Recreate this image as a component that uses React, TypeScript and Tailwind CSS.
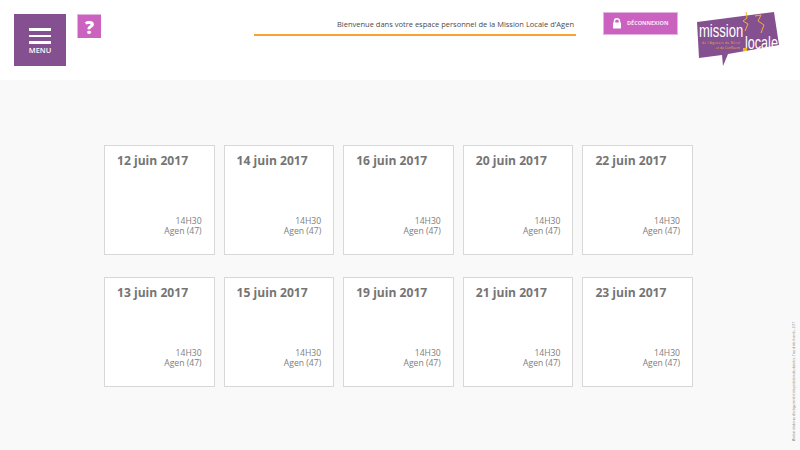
import React from 'react';

const row1 = ['12 juin 2017', '14 juin 2017', '16 juin 2017', '20 juin 2017', '22 juin 2017'];
const row2 = ['13 juin 2017', '15 juin 2017', '19 juin 2017', '21 juin 2017', '23 juin 2017'];

function DateCard({ date }: { date: string }) {
  return (
    <div className="flex h-[110px] flex-col justify-between border border-[#d8d8d8] bg-white pt-[5px] pr-3 pb-[18px] pl-3">
      <div className="text-[12.1px] leading-[20px] font-bold text-[#757575]">{date}</div>
      <div className="text-right text-[8.6px] leading-[10px] text-[#7d7d7d]">
        14H30
        <br />
        Agen (47)
      </div>
    </div>
  );
}

function Logo() {
  return (
    <svg width="86" height="58" viewBox="0 0 86 58" className="block">
      <polygon points="1,12 78,2 83,35 32,44 27,56 26,45 3,48" fill="#85508f" />
      <text transform="translate(3 27) scale(0.93 1.28)" fontFamily="'Liberation Sans', sans-serif" fontSize="14" fill="#ffffff">mission</text>
      <text transform="translate(49 39) scale(0.9 1.28)" fontFamily="'Liberation Sans', sans-serif" fontSize="14" fill="#ffffff">locale</text>
      <text x="6" y="34" fontFamily="'Open Sans', sans-serif" fontSize="3" fill="#e8b13a" textLength="38">de l'Agenais du Néral</text>
      <text x="20" y="39" fontFamily="'Open Sans', sans-serif" fontSize="3" fill="#e8b13a" textLength="24">et du Confluent</text>
      <rect x="47" y="38" width="4" height="3" fill="#f0b429" />
      <path d="M50 2 L51 8 L47 11 L52 14 L49 21 M59 6 L65 5 L62 11 L68 15 L65 23" fill="none" stroke="#f0b429" strokeWidth="1" />
    </svg>
  );
}

export default function App() {
  return (
    <div className="relative flex h-[450px] w-[800px] flex-col overflow-hidden bg-[#f9f9f9] font-['Open_Sans',sans-serif]">
      <header className="flex h-[80px] items-start bg-white pt-[14px] pl-[14px]">
        <div className="flex h-[52px] w-[52px] flex-col items-center bg-[#85508f] pt-[14px]">
          <div className="h-[3px] w-[22px] bg-white" />
          <div className="mt-[4px] h-[2px] w-[22px] bg-white" />
          <div className="mt-[4px] h-[3px] w-[22px] bg-white" />
          <div className="mt-[1px] text-[7.5px] leading-[10px] font-semibold text-white">MENU</div>
        </div>
        <div className="ml-[11px] flex h-[24px] w-[24px] items-center justify-center border-t border-l border-[#e4b4e0] bg-[#cb62c0] text-[18px] leading-none font-extrabold text-white">?</div>
        <div className="ml-[153px] flex h-[22px] w-[322px] items-start justify-end border-b-2 border-[#ff9f2e] pt-[4px] pr-[2px] text-[7.5px] leading-[12px] text-[#4a4a4a]">
          Bienvenue dans votre espace personnel de la Mission Locale d'Agen
        </div>
        <div className="mt-[-2px] ml-[27px] flex h-[23px] w-[75px] items-center border border-[#e4b4e0] bg-[#cb62c0] pl-[8px]">
          <svg width="10" height="11" viewBox="0 0 10 11" className="block">
            <path d="M2.5 5 V3.2 a2.5 2.5 0 0 1 5 0 V5" fill="none" stroke="#ffffff" strokeWidth="1.5" />
            <rect x="1" y="4.5" width="8" height="6" rx="0.5" fill="#ffffff" />
          </svg>
          <span className="ml-[5px] text-[5.5px] font-bold text-[#f8e6f6]">DÉCONNEXION</span>
        </div>
        <div className="mt-[-4px] ml-[18px]">
          <Logo />
        </div>
      </header>
      <main className="flex flex-1 flex-col gap-[22px] pt-[65px] pl-[104px]">
        <div className="grid w-[589px] grid-cols-5 gap-[9px]">
          {row1.map(d => <DateCard key={d} date={d} />)}
        </div>
        <div className="grid w-[589px] grid-cols-5 gap-[9px]">
          {row2.map(d => <DateCard key={d} date={d} />)}
        </div>
      </main>
      <div className="absolute top-[322px] left-[793px] w-[3px] rotate-180 text-[2.7px] leading-[3px] whitespace-nowrap text-[#777777] [writing-mode:vertical-rl]">
        Mention relative au développement et à la protection des données - Tous droits réservés - 2017
      </div>
    </div>
  );
}
